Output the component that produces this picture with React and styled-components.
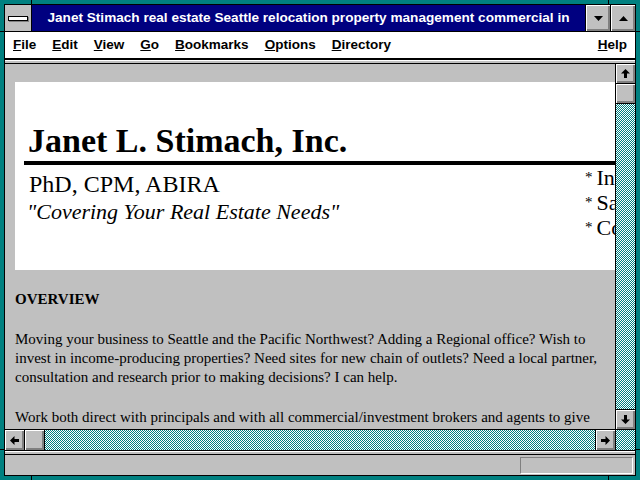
import React from 'react';
import styled, { createGlobalStyle, css } from 'styled-components';

const GlobalStyle = createGlobalStyle`
  html, body {
    margin: 0;
    padding: 0;
    background: #008080;
  }
  * {
    box-sizing: border-box;
  }
`;

const bevel = css`
  background: #c0c0c0;
  box-shadow: inset 1px 1px 0 #fff, inset -1px -1px 0 #808080, inset -2px -2px 0 #808080;
`;

const dither = css`
  background: repeating-conic-gradient(#008080 0 25%, #ffffff 0 50%) 0 0 / 2px 2px;
`;

const Window = styled.div`
  position: relative;
  width: 640px;
  height: 480px;
  padding: 4px;
  background: #008080;
`;

const Tick = styled.span`
  position: absolute;
  background: #000;
  ${p => p.vertical ? css`width: 1px; height: 4px;` : css`width: 4px; height: 1px;`}
`;

const Frame = styled.div`
  display: flex;
  flex-direction: column;
  height: 100%;
  border: 1px solid #000;
  background: #c0c0c0;
  font-family: "Liberation Sans", Arial, sans-serif;
`;

const TitleBar = styled.div`
  display: flex;
  flex-shrink: 0;
  height: 27px;
  border-bottom: 1px solid #000;
`;

const ControlBox = styled.div`
  display: flex;
  align-items: center;
  justify-content: center;
  width: 27px;
  border-right: 1px solid #000;
  background: #c0c0c0;
`;

const ControlBar = styled.span`
  width: 20px;
  height: 5px;
  background: #fff;
  border: 1px solid #000;
  box-shadow: 1px 1px 0 #808080;
`;

const Caption = styled.div`
  flex: 1;
  background: #000080;
  color: #fff;
  font-weight: bold;
  font-size: 13.6px;
  line-height: 25px;
  text-align: center;
  white-space: nowrap;
  overflow: hidden;
`;

const CaptionButton = styled.div`
  display: flex;
  align-items: center;
  justify-content: center;
  width: 25px;
  border-left: 1px solid #000;
  ${bevel}
`;

const MenuBar = styled.div`
  display: flex;
  flex-shrink: 0;
  align-items: center;
  height: 28px;
  padding: 0 0 2px 0;
  background: #fff;
  border-bottom: 2px solid #000;
`;

const MenuItem = styled.span`
  padding: 0 8px;
  font-size: 13.5px;
  font-weight: bold;
  color: #000;
  margin-left: ${p => (p.right ? 'auto' : '0')};
`;

const Strip = styled.div`
  flex-shrink: 0;
  height: 4px;
  background: #c0c0c0;
  border-top: 1px solid #fff;
  border-bottom: 1px solid #000;
`;

const Main = styled.div`
  display: flex;
  flex: 1;
  min-height: 0;
`;

const Viewport = styled.div`
  flex: 1;
  overflow: hidden;
  padding: 18px 0 0 10px;
  font-family: "Liberation Serif", "Times New Roman", serif;
  color: #000;
`;

const Banner = styled.div`
  width: 640px;
  height: 188px;
  padding-top: 39px;
  background: #fff;
`;

const Heading = styled.h1`
  margin: 0;
  padding-left: 13px;
  font-size: 34px;
  line-height: 40px;
  font-weight: bold;
`;

const Rule = styled.div`
  height: 4px;
  margin-left: 9px;
  background: #000;
`;

const BannerRow = styled.div`
  display: grid;
  grid-template-columns: 570px 1fr;
  align-items: start;
`;

const Credentials = styled.div`
  padding: 8px 0 0 14px;
`;

const Degrees = styled.div`
  font-size: 24px;
  line-height: 22px;
`;

const Slogan = styled.div`
  margin: 7px 0 0 -2px;
  font-size: 22px;
  line-height: 20px;
  font-style: italic;
`;

const Services = styled.ul`
  margin: 0;
  padding: 0;
  list-style: none;
  white-space: nowrap;
`;

const Service = styled.li`
  font-size: 22px;
  line-height: 25px;
`;

const Bullet = styled.span`
  font-size: 15px;
  vertical-align: 3px;
  margin-right: 4px;
`;

const SectionTitle = styled.div`
  margin-top: 20px;
  font-size: 15px;
  line-height: 19px;
  font-weight: bold;
`;

const Paragraph = styled.p`
  margin: 21px 0 0 0;
  font-size: 15px;
  line-height: 19px;
  white-space: nowrap;
`;

const VScroll = styled.div`
  display: flex;
  flex-direction: column;
  width: 20px;
  border-left: 1px solid #000;
`;

const ScrollButton = styled.div`
  display: flex;
  align-items: center;
  justify-content: center;
  flex-shrink: 0;
  width: ${p => (p.horizontal ? '20px' : '19px')};
  height: 20px;
  ${p => p.edge === 'bottom' && 'border-bottom: 1px solid #000;'}
  ${p => p.edge === 'top' && 'border-top: 1px solid #000;'}
  ${p => p.edge === 'right' && 'border-right: 1px solid #000;'}
  ${p => p.edge === 'left' && 'border-left: 1px solid #000;'}
  ${bevel}
`;

const Track = styled.div`
  flex: 1;
  ${dither}
`;

const HScroll = styled.div`
  display: flex;
  flex-shrink: 0;
  height: 22px;
  border-top: 1px solid #000;
  border-bottom: 1px solid #000;
`;

const Corner = styled.div`
  width: 20px;
  border-left: 1px solid #000;
  ${dither}
`;

const StatusBar = styled.div`
  display: flex;
  flex-shrink: 0;
  justify-content: flex-end;
  align-items: center;
  height: 20px;
  padding-right: 2px;
`;

const StatusField = styled.div`
  width: 113px;
  height: 17px;
  border-top: 1px solid #808080;
  border-left: 1px solid #808080;
  border-bottom: 1px solid #fff;
  border-right: 1px solid #fff;
`;

const rotations = { up: 0, right: 90, down: 180, left: 270 };

function Arrow({ dir }) {
  return (
    <svg width="11" height="11" viewBox="0 0 11 11" style={{ transform: `rotate(${rotations[dir]}deg)` }}>
      <path d="M5.5 1 L10 5.5 L7 5.5 L7 10 L4 10 L4 5.5 L1 5.5 Z" fill="#000" />
    </svg>
  );
}

function Triangle({ down }) {
  return (
    <svg width="9" height="5" viewBox="0 0 9 5">
      <path d={down ? 'M0 0 L9 0 L4.5 5 Z' : 'M0 5 L9 5 L4.5 0 Z'} fill="#000" />
    </svg>
  );
}

const menus = [
  ['F', 'ile'],
  ['E', 'dit'],
  ['V', 'iew'],
  ['G', 'o'],
  ['B', 'ookmarks'],
  ['O', 'ptions'],
  ['D', 'irectory'],
];

const ticks = [
  { vertical: true, style: { left: 31, top: 0 } },
  { vertical: true, style: { left: 608, top: 0 } },
  { vertical: true, style: { left: 31, bottom: 0 } },
  { vertical: true, style: { left: 608, bottom: 0 } },
  { style: { left: 0, top: 31 } },
  { style: { right: 0, top: 31 } },
  { style: { left: 0, top: 449 } },
  { style: { right: 0, top: 449 } },
];

const services = ['Investment', 'Sales & Leasing', 'Consulting'];

export default function App() {
  return (
    <Window>
      <GlobalStyle />
      {ticks.map((t, i) => (
        <Tick key={i} vertical={t.vertical} style={t.style} />
      ))}
      <Frame>
        <TitleBar>
          <ControlBox>
            <ControlBar />
          </ControlBox>
          <Caption>Janet Stimach real estate Seattle relocation property management commercial in</Caption>
          <CaptionButton>
            <Triangle down />
          </CaptionButton>
          <CaptionButton>
            <Triangle />
          </CaptionButton>
        </TitleBar>
        <MenuBar>
          {menus.map(([key, rest]) => (
            <MenuItem key={key}>
              <u>{key}</u>
              {rest}
            </MenuItem>
          ))}
          <MenuItem right>
            <u>H</u>elp
          </MenuItem>
        </MenuBar>
        <Strip />
        <Main>
          <Viewport>
            <Banner>
              <Heading>Janet L. Stimach, Inc.</Heading>
              <Rule />
              <BannerRow>
                <Credentials>
                  <Degrees>PhD, CPM, ABIRA</Degrees>
                  <Slogan>"Covering Your Real Estate Needs"</Slogan>
                </Credentials>
                <Services>
                  {services.map(s => (
                    <Service key={s}>
                      <Bullet>*</Bullet>
                      {s}
                    </Service>
                  ))}
                </Services>
              </BannerRow>
            </Banner>
            <SectionTitle>OVERVIEW</SectionTitle>
            <Paragraph>
              Moving your business to Seattle and the Pacific Northwest? Adding a Regional office? Wish to
              <br />
              invest in income-producing properties? Need sites for new chain of outlets? Need a local partner,
              <br />
              consultation and research prior to making decisions? I can help.
            </Paragraph>
            <Paragraph>
              Work both direct with principals and with all commercial/investment brokers and agents to give
              <br />
              clients the widest possible choice of properties and the most complete information.
            </Paragraph>
          </Viewport>
          <VScroll>
            <ScrollButton edge="bottom">
              <Arrow dir="up" />
            </ScrollButton>
            <ScrollButton edge="bottom" />
            <Track />
            <ScrollButton edge="top">
              <Arrow dir="down" />
            </ScrollButton>
          </VScroll>
        </Main>
        <HScroll>
          <ScrollButton horizontal edge="right">
            <Arrow dir="left" />
          </ScrollButton>
          <ScrollButton horizontal edge="right" />
          <Track />
          <ScrollButton horizontal edge="left">
            <Arrow dir="right" />
          </ScrollButton>
          <Corner />
        </HScroll>
        <Strip />
        <StatusBar>
          <StatusField />
        </StatusBar>
      </Frame>
    </Window>
  );
}
